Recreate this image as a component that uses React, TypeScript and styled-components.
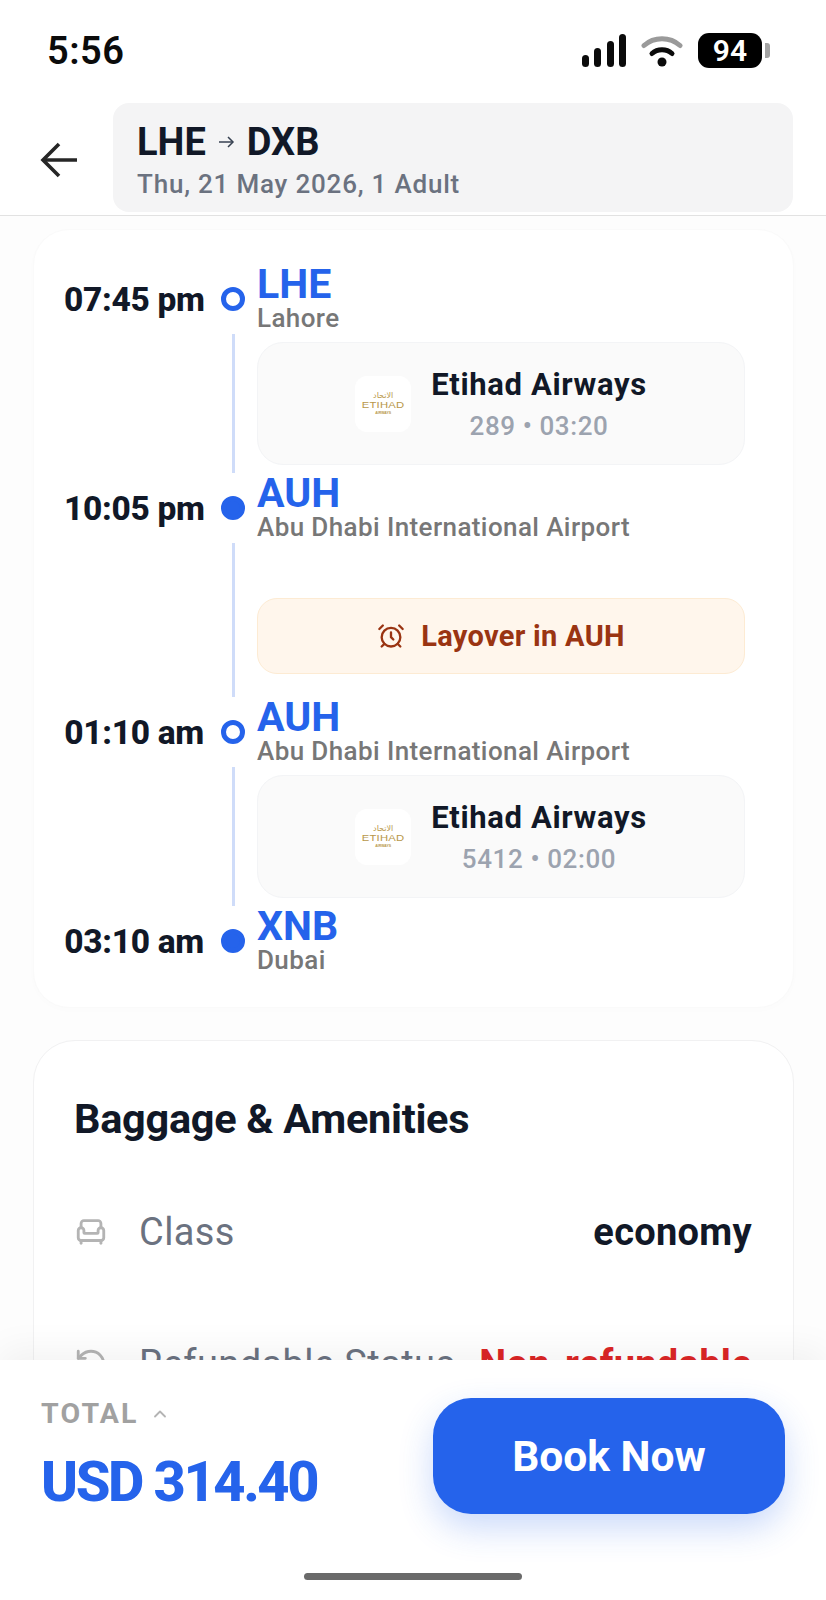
import React from "react";
import styled, { createGlobalStyle } from "styled-components";
import { AlarmClock, Armchair, ChevronUp, RotateCcw } from "lucide-react";

const GlobalStyle = createGlobalStyle`
  * { box-sizing: border-box; }
  html, body { margin: 0; padding: 0; background: #fff; }
  body { font-family: Roboto, "Liberation Sans", sans-serif; }
`;

const Page = styled.div`
  width: 826px;
  height: 1600px;
  display: flex;
  flex-direction: column;
  overflow: hidden;
  background: #fff;
`;

const StatusBar = styled.div`
  height: 103px;
  flex: none;
  display: flex;
  justify-content: space-between;
  align-items: flex-start;
  padding: 30px 64px 0 47px;
`;

const Clock = styled.span`
  font-size: 38px;
  line-height: 42px;
  font-weight: 600;
  color: #0b0b0b;
  letter-spacing: 0.5px;
`;

const StatusIcons = styled.div`
  display: flex;
  align-items: center;
  gap: 15px;
  margin-top: 3px;
`;

const Battery = styled.div`
  position: relative;
  width: 64px;
  height: 35px;
  border-radius: 11px;
  background: #000;
  color: #fff;
  font-size: 30px;
  font-weight: 600;
  line-height: 35px;
  text-align: center;
  &::after {
    content: "";
    position: absolute;
    right: -8px;
    top: 10px;
    width: 5px;
    height: 15px;
    border-radius: 0 3px 3px 0;
    background: #a3a3a3;
  }
`;

const Header = styled.header`
  flex: none;
  height: 113px;
  display: flex;
  gap: 34px;
  padding: 0 33px 3px 40px;
  border-bottom: 1px solid #e2e2e2;
  align-items: stretch;
`;

const BackButton = styled.button`
  width: 39px;
  border: 0;
  padding: 0;
  background: none;
  display: flex;
  align-items: center;
  color: #262626;
  svg { display: block; margin-top: 4px; }
`;

const SearchBox = styled.div`
  flex: 1;
  background: #f4f4f5;
  border-radius: 16px;
  padding: 18px 24px 0;
`;

const Route = styled.div`
  display: flex;
  align-items: center;
  font-size: 38px;
  line-height: 42px;
  font-weight: 700;
  color: #111827;
  gap: 12px;
`;

const RouteDate = styled.div`
  font-size: 26px;
  line-height: 32px;
  margin-top: 5px;
  font-weight: 500;
  letter-spacing: 0.8px;
  color: #6b7280;
`;

const Content = styled.main`
  flex: 1;
  min-height: 0;
  overflow: hidden;
  background: #fdfdfd;
  padding: 13px 32px 0 33px;
`;

const ItineraryCard = styled.section`
  background: #fff;
  border-radius: 36px;
  padding: 34px 48px 31px 30px;
  box-shadow: 0 2px 10px rgba(0, 0, 0, 0.012);
  border: 1px solid #fafafa;
`;

const Row = styled.div`
  display: grid;
  grid-template-columns: 140px 53px 1fr;
  align-items: center;
`;

const Time = styled.div`
  font-size: 33.5px;
  font-weight: 800;
  color: #111827;
  text-align: right;
  letter-spacing: -0.3px;
  white-space: nowrap;
`;

const DotCell = styled.div`
  display: flex;
  justify-content: center;
  padding-left: 5px;
`;

const Dot = styled.span<{ $filled?: boolean }>`
  width: 24px;
  height: 24px;
  border-radius: 50%;
  border: 5px solid #2563eb;
  background: ${(p) => (p.$filled ? "#2563eb" : "#fff")};
`;

const StopInfo = styled.div`
  padding-bottom: 2px;
`;

const Code = styled.div`
  font-size: 41px;
  line-height: 40px;
  font-weight: 700;
  color: #2563eb;
`;

const Place = styled.div`
  font-size: 26px;
  line-height: 28px;
  font-weight: 500;
  color: #777;
  letter-spacing: 0.4px;
  white-space: nowrap;
`;

const Segment = styled.div`
  display: grid;
  grid-template-columns: 140px 53px 1fr;
`;

const Rail = styled.div`
  grid-column: 2;
  display: flex;
  justify-content: center;
  padding-left: 5px;
  &::before {
    content: "";
    width: 3px;
    background: #cfdcf9;
  }
`;

const SegmentBody = styled.div<{ $top: number; $bottom: number }>`
  padding: ${(p) => p.$top}px 0 ${(p) => p.$bottom}px;
`;

const FlightCard = styled.div`
  height: 123px;
  display: flex;
  align-items: center;
  justify-content: center;
  gap: 20px;
  background: #fafafa;
  border: 1px solid #f3f4f6;
  border-radius: 26px;
`;

const LogoTile = styled.div`
  width: 56px;
  height: 56px;
  border-radius: 12px;
  background: #fff;
  display: flex;
  flex-direction: column;
  align-items: center;
  justify-content: center;
  color: #b8974a;
`;

const LogoArabic = styled.span`
  font-family: "DejaVu Sans", sans-serif;
  font-size: 8px;
  line-height: 8px;
`;

const LogoName = styled.span`
  font-family: "Liberation Sans", sans-serif;
  font-size: 9px;
  line-height: 10px;
  letter-spacing: 0.2px;
  transform: scaleX(1.25);
`;

const LogoSub = styled.span`
  font-family: "Liberation Sans", sans-serif;
  font-size: 3.5px;
  line-height: 6px;
  font-weight: 700;
`;

const FlightInfo = styled.div`
  text-align: center;
`;

const Airline = styled.div`
  font-size: 31px;
  line-height: 38px;
  font-weight: 700;
  color: #111827;
  letter-spacing: 0.65px;
`;

const FlightMeta = styled.div`
  font-size: 26px;
  line-height: 30px;
  margin-top: 7px;
  font-weight: 500;
  color: #9ca3af;
  letter-spacing: 0.6px;
`;

const LayoverBanner = styled.div`
  height: 76px;
  display: flex;
  align-items: center;
  justify-content: center;
  gap: 16px;
  background: #fff6ec;
  border: 1px solid #fdebd3;
  border-radius: 20px;
  color: #9a3412;
  font-size: 29px;
  font-weight: 700;
  letter-spacing: 0.3px;
`;

const AmenitiesCard = styled.section`
  margin-top: 32px;
  height: 500px;
  background: #fff;
  border: 1px solid #f1f1f2;
  border-radius: 42px;
  padding: 51px 40px 0 40px;
`;

const SectionTitle = styled.h2`
  margin: 0;
  font-size: 41.5px;
  line-height: 54px;
  font-weight: 700;
  color: #111827;
  letter-spacing: -0.3px;
`;

const AmenityList = styled.div`
  margin-top: 20px;
`;

const AmenityRow = styled.div`
  height: 132px;
  display: flex;
  align-items: center;
  justify-content: space-between;
  white-space: nowrap;
`;

const AmenityLabel = styled.div`
  display: flex;
  align-items: center;
  gap: 31px;
  font-size: 38px;
  color: #6b7280;
  letter-spacing: 0.4px;
  svg { color: #b4b4b4; }
`;

const AmenityValue = styled.div<{ $danger?: boolean }>`
  font-size: 38px;
  font-weight: 700;
  letter-spacing: 0.3px;
  margin-right: 1px;
  color: ${(p) => (p.$danger ? "#dc2626" : "#111827")};
`;

const Footer = styled.footer`
  flex: none;
  height: 240px;
  position: relative;
  z-index: 1;
  background: #fff;
  box-shadow: 0 -10px 34px rgba(0, 0, 0, 0.05);
  display: flex;
  justify-content: space-between;
  align-items: flex-start;
  padding: 38px 41px 0 41px;
`;

const TotalLabel = styled.div`
  display: flex;
  align-items: center;
  gap: 11px;
  font-size: 28.5px;
  line-height: 32px;
  font-weight: 700;
  letter-spacing: 2.2px;
  color: #a1a1a1;
  svg { color: #b4b4b4; }
`;

const TotalAmount = styled.div`
  margin-top: 19px;
  font-size: 56px;
  line-height: 66px;
  font-weight: 800;
  color: #2563eb;
  letter-spacing: -2.4px;
`;

const BookButton = styled.button`
  width: 352px;
  height: 116px;
  border: 0;
  border-radius: 38px;
  background: #2563eb;
  color: #fff;
  font-family: inherit;
  font-size: 42.5px;
  font-weight: 700;
  box-shadow: 0 14px 34px rgba(37, 99, 235, 0.24);
`;

const HomeIndicator = styled.div`
  position: absolute;
  left: 304px;
  bottom: 20px;
  width: 218px;
  height: 7px;
  border-radius: 4px;
  background: #6a6a6a;
`;

const SignalIcon = () => (
  <svg width="44" height="33" viewBox="0 0 44 33" fill="#0b0b0b">
    <rect x="0" y="21" width="7" height="12" rx="3.5" />
    <rect x="12" y="14" width="7" height="19" rx="3.5" />
    <rect x="25" y="7" width="7" height="26" rx="3.5" />
    <rect x="37" y="0" width="7" height="33" rx="3.5" />
  </svg>
);

const WifiIcon = () => (
  <svg width="42" height="32" viewBox="0 0 42 32" fill="none" strokeLinecap="round">
    <path d="M3 10.5C13 1.5 29 1.5 39 10.5" stroke="#9a9a9a" strokeWidth="5" />
    <path d="M11 18.5C16.5 13.5 25.5 13.5 31 18.5" stroke="#0b0b0b" strokeWidth="5" />
    <circle cx="21" cy="27" r="4.5" fill="#0b0b0b" />
  </svg>
);

const BackIcon = () => (
  <svg width="38" height="36" viewBox="0 0 38 36" fill="none" stroke="currentColor" strokeWidth="3.6">
    <path d="M37 18H3" />
    <path d="M19 2 3 18l16 16" />
  </svg>
);

const RouteArrow = () => (
  <svg width="17" height="12" viewBox="0 0 17 12" fill="none" stroke="#374151" strokeWidth="1.5">
    <path d="M1 6h14" />
    <path d="M10 1l5 5-5 5" />
  </svg>
);

type FlightProps = { number: string; duration: string };

const Flight: React.FC<FlightProps> = ({ number, duration }) => (
  <FlightCard>
    <LogoTile>
      <LogoArabic>الاتحاد</LogoArabic>
      <LogoName>ETIHAD</LogoName>
      <LogoSub>AIRWAYS</LogoSub>
    </LogoTile>
    <FlightInfo>
      <Airline>Etihad Airways</Airline>
      <FlightMeta>
        {number} • {duration}
      </FlightMeta>
    </FlightInfo>
  </FlightCard>
);

type StopProps = { time: string; code: string; place: string; filled?: boolean };

const Stop: React.FC<StopProps> = ({ time, code, place, filled }) => (
  <Row>
    <Time>{time}</Time>
    <DotCell>
      <Dot $filled={filled} />
    </DotCell>
    <StopInfo>
      <Code>{code}</Code>
      <Place>{place}</Place>
    </StopInfo>
  </Row>
);

export default function App() {
  return (
    <Page>
      <GlobalStyle />
      <StatusBar>
        <Clock>5:56</Clock>
        <StatusIcons>
          <SignalIcon />
          <WifiIcon />
          <Battery>94</Battery>
        </StatusIcons>
      </StatusBar>
      <Header>
        <BackButton>
          <BackIcon />
        </BackButton>
        <SearchBox>
          <Route>
            LHE
            <RouteArrow />
            DXB
          </Route>
          <RouteDate>Thu, 21 May 2026, 1 Adult</RouteDate>
        </SearchBox>
      </Header>
      <Content>
        <ItineraryCard>
          <Stop time="07:45 pm" code="LHE" place="Lahore" />
          <Segment>
            <Rail />
            <SegmentBody $top={8} $bottom={8}>
              <Flight number="289" duration="03:20" />
            </SegmentBody>
          </Segment>
          <Stop time="10:05 pm" code="AUH" place="Abu Dhabi International Airport" filled />
          <Segment>
            <Rail />
            <SegmentBody $top={55} $bottom={23}>
              <LayoverBanner>
                <AlarmClock size={28} strokeWidth={2} />
                Layover in AUH
              </LayoverBanner>
            </SegmentBody>
          </Segment>
          <Stop time="01:10 am" code="AUH" place="Abu Dhabi International Airport" />
          <Segment>
            <Rail />
            <SegmentBody $top={8} $bottom={8}>
              <Flight number="5412" duration="02:00" />
            </SegmentBody>
          </Segment>
          <Stop time="03:10 am" code="XNB" place="Dubai" filled />
        </ItineraryCard>
        <AmenitiesCard>
          <SectionTitle>Baggage &amp; Amenities</SectionTitle>
          <AmenityList>
            <AmenityRow>
              <AmenityLabel>
                <Armchair size={34} strokeWidth={2} />
                Class
              </AmenityLabel>
              <AmenityValue>economy</AmenityValue>
            </AmenityRow>
            <AmenityRow>
              <AmenityLabel>
                <RotateCcw size={34} strokeWidth={2} />
                Refundable Status
              </AmenityLabel>
              <AmenityValue $danger>Non-refundable</AmenityValue>
            </AmenityRow>
          </AmenityList>
        </AmenitiesCard>
      </Content>
      <Footer>
        <div>
          <TotalLabel>
            TOTAL
            <ChevronUp size={20} strokeWidth={2.2} />
          </TotalLabel>
          <TotalAmount>USD 314.40</TotalAmount>
        </div>
        <BookButton>Book Now</BookButton>
        <HomeIndicator />
      </Footer>
    </Page>
  );
}
